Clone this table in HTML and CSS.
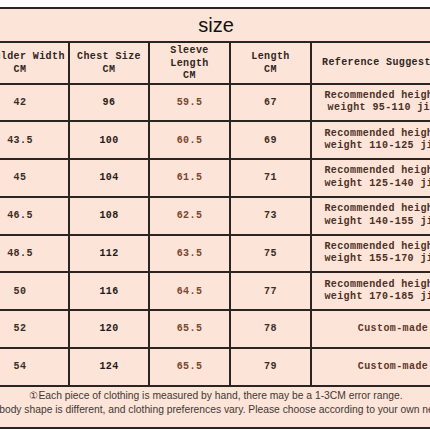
FILE: index.html
```html
<!DOCTYPE html>
<html lang="en">
<head>
    <meta charset="UTF-8">
    <meta name="viewport" content="width=device-width, initial-scale=1.0">
    <title>Size Chart</title>
    <link rel="stylesheet" href="styles.css">
</head>
<body>
<div class="sheet">
    <table class="chart">
        <colgroup>
            <col class="c1">
            <col class="c2">
            <col class="c3">
            <col class="c4">
            <col class="c5">
        </colgroup>
        <tr class="title-row">
            <td colspan="5" class="title">size</td>
        </tr>
        <tr class="head-row">
            <td>Shoulder Width<br>CM</td>
            <td>Chest Size<br>CM</td>
            <td class="tall">Sleeve<br>Length<br>CM</td>
            <td>Length<br>CM</td>
            <td>Reference Suggestion</td>
        </tr>
        <tr class="row">
            <td>42</td><td class="dark">96</td><td class="brown">59.5</td><td>67</td>
            <td class="tip">Recommended height<br>weight 95-110 jin</td>
        </tr>
        <tr class="row">
            <td>43.5</td><td class="dark">100</td><td class="brown">60.5</td><td>69</td>
            <td class="tip">Recommended height<br>weight 110-125 jin</td>
        </tr>
        <tr class="row">
            <td>45</td><td class="dark">104</td><td class="brown">61.5</td><td>71</td>
            <td class="tip">Recommended height<br>weight 125-140 jin</td>
        </tr>
        <tr class="row">
            <td>46.5</td><td class="dark">108</td><td class="brown">62.5</td><td>73</td>
            <td class="tip">Recommended height<br>weight 140-155 jin</td>
        </tr>
        <tr class="row">
            <td>48.5</td><td class="dark">112</td><td class="brown">63.5</td><td>75</td>
            <td class="tip">Recommended height<br>weight 155-170 jin</td>
        </tr>
        <tr class="row">
            <td>50</td><td class="dark">116</td><td class="brown">64.5</td><td>77</td>
            <td class="tip">Recommended height<br>weight 170-185 jin</td>
        </tr>
        <tr class="row">
            <td>52</td><td class="dark">120</td><td class="brown">65.5</td><td>78</td>
            <td class="custom">Custom-made</td>
        </tr>
        <tr class="row">
            <td>54</td><td class="dark">124</td><td class="brown">65.5</td><td>79</td>
            <td class="custom">Custom-made</td>
        </tr>
        <tr class="note-row">
            <td colspan="5" class="note">
                <div class="note-line"><span>&#9312;Each piece of clothing is measured by hand, there may be a 1-3CM error range.</span></div>
                <div class="note-line second"><span>&#9313;Everyone's body shape is different, and clothing preferences vary. Please choose according to your own needs.</span></div>
            </td>
        </tr>
    </table>
</div>
</body>
</html>
```

FILE: styles.css
```css
body{
    margin: 0;
    background-color: #ffffff;
}
.sheet{
    width: 430px;
    height: 430px;
    overflow: hidden;
    padding-top: 7px;
    box-sizing: border-box;
}
.chart{
    margin-left: -30px;
    width: 490px;
    table-layout: fixed;
    border-collapse: collapse;
    background-color: #fde4d8;
    font-family: "Liberation Mono", "DejaVu Sans Mono", monospace;
    font-weight: bold;
    font-size: 10px;
    letter-spacing: 0.4px;
    color: #3b2c25;
}
.c1{ width: 98px; }
.c2{ width: 80px; }
.c3{ width: 81px; }
.c4{ width: 81px; }
.c5{ width: 150px; }

.chart td{
    border: 2px solid #2a2522;
    padding: 0;
    text-align: center;
    vertical-align: middle;
    line-height: 13px;
}
.title-row td{
    height: 32px;
}
.title{
    font-family: "Liberation Sans", Arial, sans-serif;
    font-weight: normal;
    font-size: 20px;
    letter-spacing: 0;
    color: #111111;
}
.head-row td{
    height: 36px;
    color: #2f2622;
}
.head-row .tall{
    line-height: 12.5px;
    padding-top: 2px;
}
.row td{
    height: 35.75px;
}
.dark{
    color: #1f1a18;
}
.brown{
    color: #7a4630;
}
.row .tip{
    line-height: 12.5px;
    color: #4a3026;
    padding-right: 8px;
}
.row .custom{
    color: #5e3526;
    padding-left: 14px;
}
.note-row td{
    height: 38px;
    vertical-align: top;
    padding-top: 2px;
}
.note{
    font-family: "Liberation Sans", Arial, sans-serif;
    font-weight: normal;
    font-size: 10.3px;
    letter-spacing: 0;
    color: #3d3835;
}
.note-line{
    display: flex;
    justify-content: center;
    white-space: nowrap;
    line-height: 14px;
}
.note-line.second{
    padding-right: 42px;
}
```
